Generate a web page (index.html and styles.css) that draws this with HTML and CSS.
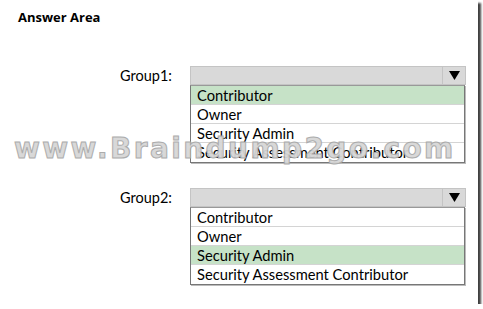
FILE: index.html
```html
<!DOCTYPE html>
<html lang="en">
<head>
<meta charset="UTF-8">
<title>Answer Area</title>
<link rel="stylesheet" href="styles.css">
</head>
<body>
<div class="card">
<div class="title">Answer Area</div>

<div class="group group-first">
<div class="label">Group1:</div>
<div class="dropdown">
<div class="select-head">
<div class="arrow">
<svg width="11" height="9" viewBox="0 0 11 9"><path d="M0 0H11L5.5 9Z" fill="#000"/></svg>
</div>
</div>
<ul class="options">
<li class="selected">Contributor</li>
<li>Owner</li>
<li>Security Admin</li>
<li>Security Assessment Contributor</li>
</ul>
</div>
</div>

<div class="group group-second">
<div class="label">Group2:</div>
<div class="dropdown">
<div class="select-head">
<div class="arrow">
<svg width="11" height="9" viewBox="0 0 11 9"><path d="M0 0H11L5.5 9Z" fill="#000"/></svg>
</div>
</div>
<ul class="options">
<li>Contributor</li>
<li>Owner</li>
<li class="selected">Security Admin</li>
<li>Security Assessment Contributor</li>
</ul>
</div>
</div>

<div class="watermark">www.Braindump2go.com</div>
</div>
</body>
</html>
```

FILE: styles.css
```css
body {
    margin: 0;
    background-color: #fff;
    font: 14px/1.2 Lato, "Open Sans", sans-serif;
    color: #000;
}

.card {
    position: relative;
    width: 478px;
    height: 304px;
    background: #fff;
    box-shadow: 3px 3px 2px rgba(0, 0, 0, 0.75);
    overflow: hidden;
}

.title {
    padding: 8px 0 0 18px;
    font: bold 13px/18px "Open Sans", sans-serif;
}

.group {
    display: grid;
    grid-template-columns: 172px 276px;
    column-gap: 18px;
}

.group-first {
    margin-top: 40px;
}

.group-second {
    margin-top: 25px;
}

.label {
    text-align: right;
    height: 18px;
    line-height: 19px;
    font-size: 14.5px;
}

.select-head {
    display: flex;
    justify-content: flex-end;
    height: 17px;
    background: #d9d9d9;
    border: 1px solid #c4c4c4;
}

.arrow {
    width: 22px;
    display: flex;
    align-items: center;
    justify-content: center;
    border-left: 1px solid #c4c4c4;
}

.options {
    list-style: none;
    margin: 0;
    padding: 0;
    width: 273px;
    border: 1px solid #777;
    border-top-color: #999;
    box-shadow: 1px 1px 0 #bbb;
}

.options li {
    height: 18px;
    line-height: 18px;
    padding-left: 6px;
    border-bottom: 1px solid #d4d4d4;
    font-size: 14.7px;
}

.options li:last-child {
    height: 19px;
    border-bottom: none;
}

.options li.selected {
    background: #c6e2c7;
}

.watermark {
    position: absolute;
    left: 14px;
    top: 133px;
    font: bold 28px/32px "DejaVu Sans", sans-serif;
    letter-spacing: 2.4px;
    color: #d6d6d6;
    -webkit-text-stroke: 1px #a8a8a8;
    opacity: 0.95;
    white-space: nowrap;
}
```
